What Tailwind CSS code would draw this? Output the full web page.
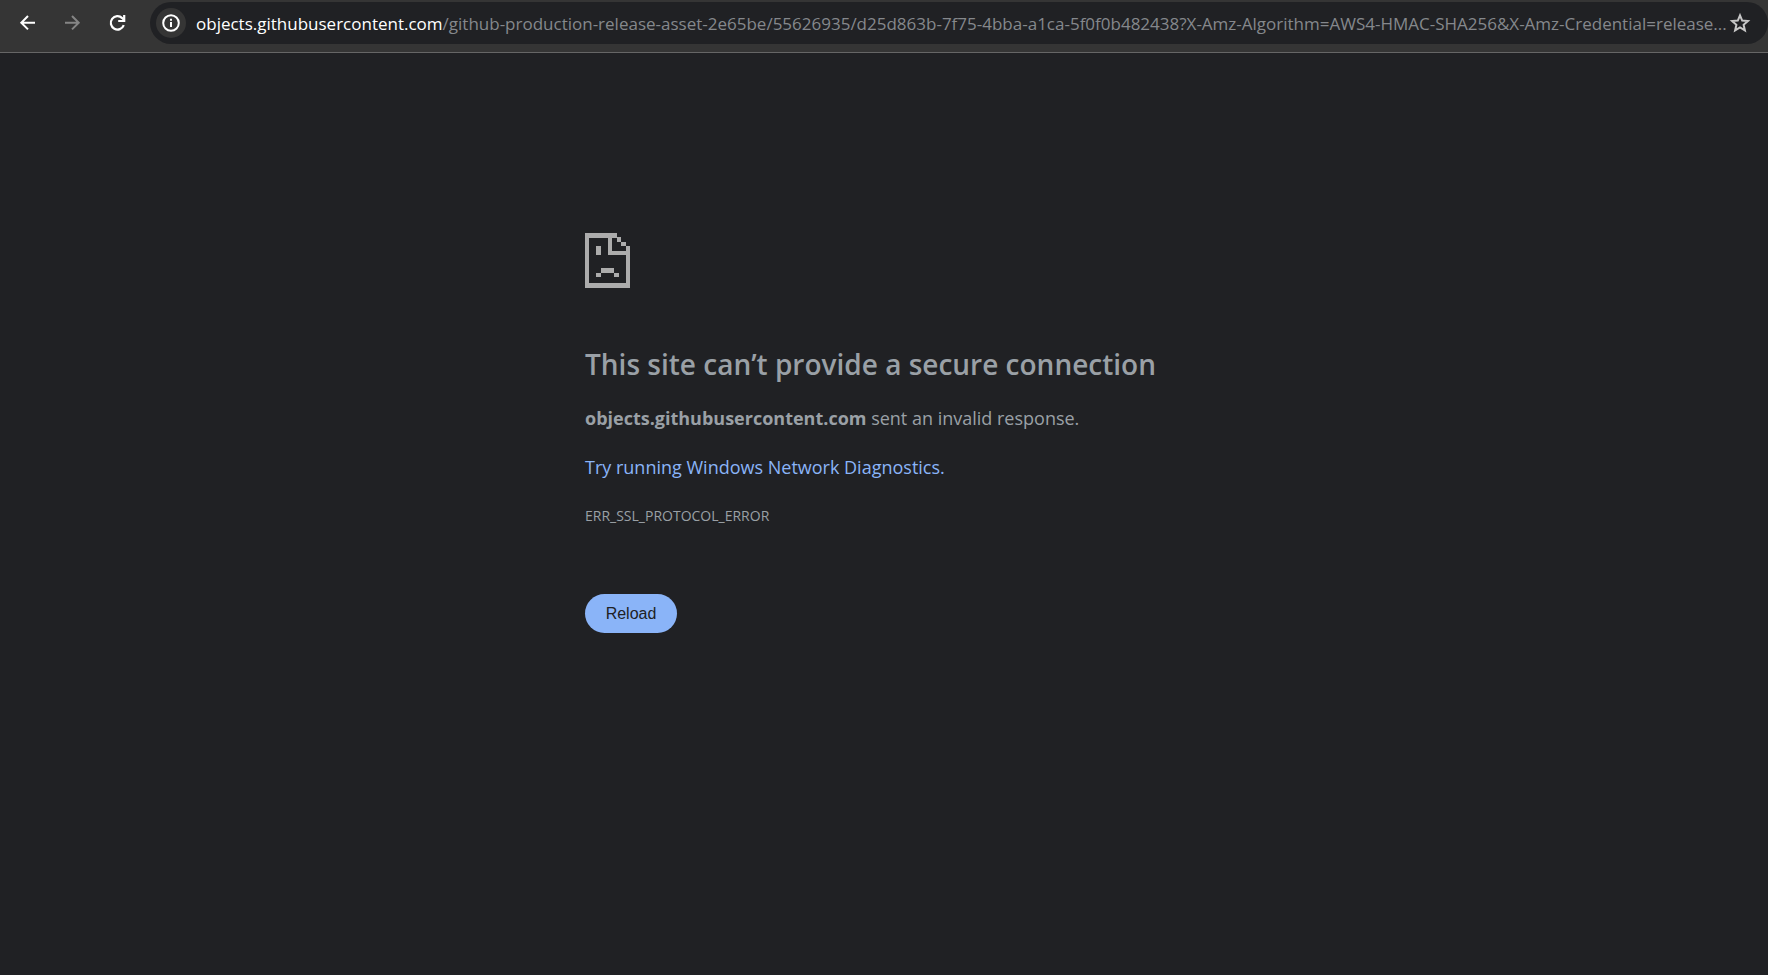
<!DOCTYPE html>
<html lang="en">
<head>
  <meta charset="UTF-8">
  <meta name="viewport" content="width=device-width, initial-scale=1.0">
  <title>objects.githubusercontent.com</title>
  <script src="https://cdn.jsdelivr.net/npm/@tailwindcss/browser@4"></script>
</head>
<body class="min-h-screen bg-[#202124] text-[#9aa0a6] font-['Open_Sans',sans-serif]">

  <!-- Toolbar -->
  <header class="flex items-start h-[53px] pt-[2px] bg-[#353535] border-b border-[#666666]">
    <nav class="flex items-center h-[42px] pl-[13px] gap-[15px] w-[150px] shrink-0">
      <button type="button" aria-label="Back" class="size-[30px] grid place-items-center text-white">
        <svg class="size-5" viewBox="0 0 20 20" fill="none" stroke="currentColor" stroke-width="2">
          <path d="M17 9.7H3.5M10 3L3.3 9.7l6.7 6.7"/>
        </svg>
      </button>
      <button type="button" aria-label="Forward" class="size-[30px] grid place-items-center text-[#858585]" disabled>
        <svg class="size-5" viewBox="0 0 20 20" fill="none" stroke="currentColor" stroke-width="2">
          <path d="M2 9.7h13.5M9 3l6.7 6.7L9 16.4"/>
        </svg>
      </button>
      <button type="button" aria-label="Reload page" class="size-[30px] grid place-items-center text-white">
        <svg class="size-5" viewBox="0 0 20 20" fill="none" stroke="currentColor" stroke-width="2.2">
          <path d="M15.8 12.2A6.7 6.7 0 1 1 14.2 5.1L16 7"/>
          <path d="M16.2 2v6h-6"/>
        </svg>
      </button>
    </nav>

    <!-- Address bar -->
    <div class="flex items-center flex-1 min-w-0 h-[42px] pl-[6px] pr-[17px] rounded-full bg-[#202124]">
      <button type="button" aria-label="View site information" class="size-[30px] shrink-0 grid place-items-center rounded-full bg-[#353535] text-white">
        <svg class="size-5" viewBox="0 0 20 20" fill="none" stroke="currentColor" stroke-width="2">
          <circle cx="10" cy="10" r="7.8"/>
          <path d="M10 9v5M10 5.8v2"/>
        </svg>
      </button>
      <div role="textbox" aria-label="Address" contenteditable="true" spellcheck="false" class="flex-1 min-w-0 ml-[10px] pt-[2px] text-[17px] leading-6 whitespace-nowrap overflow-hidden text-[#85888c] outline-none"><span class="text-white">objects.githubusercontent.com</span>/github-production-release-asset-2e65be/55626935/d25d863b-7f75-4bba-a1ca-5f0f0b482438?X-Amz-Algorithm=AWS4-HMAC-SHA256&amp;X-Amz-Credential=release...</div>
      <button type="button" aria-label="Bookmark this tab" class="shrink-0 text-[#c7c7c7]">
        <svg class="size-[22px]" viewBox="0 0 22 22" fill="none" stroke="currentColor" stroke-width="2">
          <path d="M11 3.4l2.2 5.2 5.7.5-4.3 3.7 1.3 5.6-4.9-3-4.9 3 1.3-5.6-4.3-3.7 5.7-.5z"/>
        </svg>
      </button>
    </div>
  </header>

  <!-- Error page -->
  <main class="mx-auto w-full max-w-[598px] pt-[180px]">
    <svg class="w-[45px] h-[55px] text-[#acacac]" viewBox="0 0 135 165" fill="currentColor" shape-rendering="crispEdges" aria-hidden="true">
      <path d="M0 0h96v14H13v136h109V66H69V14h13v39h53v111H0z"/>
      <path d="M96 13h13v13H96zM109 26h13v14h-13zM122 40h13v14h-13z"/>
      <path d="M33 40h14v27H33zM47 106h41v14H47zM33 120h14v12H33zM88 120h14v12H88z"/>
    </svg>
    <h1 class="mt-[57px] text-[28px] leading-[38px] font-semibold">This site can’t provide a secure connection</h1>
    <p class="mt-[20px] text-[18px] leading-[30px]"><strong class="font-bold">objects.githubusercontent.com</strong> sent an invalid response.</p>
    <p class="mt-[19px] text-[18px] leading-[30px]"><a href="#" class="text-[#8ab4f8]">Try running Windows Network Diagnostics.</a></p>
    <p class="mt-[22px] text-[14px] leading-[24px]">ERR_SSL_PROTOCOL_ERROR</p>
    <button type="button" class="mt-[66px] h-[39px] min-w-[92px] px-5 rounded-full bg-[#8ab4f8] text-[#202124] text-[16px] leading-5 font-['Liberation_Sans',sans-serif]">Reload</button>
  </main>

</body>
</html>
